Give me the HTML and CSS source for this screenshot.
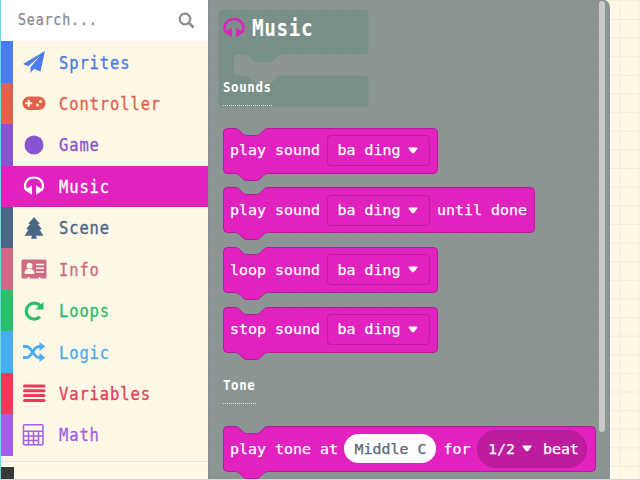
FILE: index.html
```
<!DOCTYPE html>
<html lang="en">
<head>
<meta charset="utf-8">
<title>Toolbox</title>
<link rel="stylesheet" href="styles.css">
</head>
<body>
<svg class="defs" width="0" height="0">
  <symbol id="phones" viewBox="0 0 22 20"><path d="M3 14.500A9.500 8.800 0 1 1 19 14.500" fill="none" stroke="currentColor" stroke-width="2.500"/><path d="M8.800 9.500v9.700L1.800 14.500l1.500-1.500zM13.200 9.500v9.700l7-4.700-1.500-1.500z" fill="currentColor"/></symbol>
  <symbol id="caret" viewBox="0 0 10 7"><path d="M1.300.5h7.400q1.200 0 .7 1.200L6 5.900q-1 .8-2 0L.6 1.700Q.1.500 1.300.5z" fill="#fff"/></symbol>
</svg>
<div class="app">
  <aside class="sidebar">
    <div class="search"><span class="word">Search...</span>
      <svg width="17" height="17" viewBox="0 0 17 17"><circle cx="7" cy="7" r="5.300" fill="none" stroke="#8e8e8e" stroke-width="2.200"/><path d="M11 11l4 4" stroke="#8e8e8e" stroke-width="2.500" stroke-linecap="round"/></svg>
    </div>
    <div class="row sprites"><svg class="ico" viewBox="0 0 24 24"><path d="M23 1L1 14l5.200 2.200L18 6 8.500 17.200V23l3.500-4.200 6.500 2.700z" fill="currentColor"/></svg><span class="word">Sprites</span></div>
    <div class="row controller"><svg class="ico" viewBox="0 0 24 24"><rect x=".5" y="5.500" width="23" height="13.500" rx="6.700" fill="currentColor"/><path d="M6.700 8.700v7M3.200 12.200h7" stroke="#fff8e6" stroke-width="2"/><circle cx="18.500" cy="10.500" r="1.500" fill="#fff8e6"/><circle cx="15.500" cy="14" r="1.500" fill="#fff8e6"/></svg><span class="word">Controller</span></div>
    <div class="row game"><svg class="ico" viewBox="0 0 24 24"><circle cx="12" cy="12" r="9.500" fill="currentColor"/></svg><span class="word">Game</span></div>
    <div class="row music"><svg class="ico" viewBox="0 0 24 24"><use href="#phones" x="1.500" y="2.500" width="21" height="19"/></svg><span class="word">Music</span></div>
    <div class="row scene"><svg class="ico" viewBox="0 0 24 24"><path d="M12 1.500l5.500 6-2 .5 4 5-2.300.5L21 19.500h-7.300l.8 3h-5l.8-3H3l3.800-6-2.300-.5 4-5-2-.5z" fill="currentColor" stroke="currentColor" stroke-linejoin="round" stroke-width=".5"/></svg><span class="word">Scene</span></div>
    <div class="row info"><svg class="ico wide" viewBox="0 0 26 24"><path d="M2 2.500h22q1.500 0 1.500 1.500v16q0 1.500-1.500 1.500h-4.500V20h-2v1.500h-9V20h-2v1.500H2Q.5 21.500.5 20V4Q.5 2.500 2 2.500z" fill="currentColor"/><circle cx="8.500" cy="8.700" r="3" fill="#fff8e6"/><path d="M4 16.500v-1q0-2.500 2.500-3h4q2.500.5 2.500 3v1z" fill="#fff8e6" stroke="#fff8e6"/><path d="M15 7.500h8M15 11.200h8M15 15h8" stroke="#fff8e6" stroke-width="1.400"/></svg><span class="word">Info</span></div>
    <div class="row loops"><svg class="ico" viewBox="0 0 24 24"><path d="M18.500 7.200A8 8 0 1 0 18 17.700" fill="none" stroke="currentColor" stroke-width="3.300"/><path d="M21.500 2.700v7.700h-8.300z" fill="currentColor"/></svg><span class="word">Loops</span></div>
    <div class="row logic"><svg class="ico" viewBox="0 0 24 24"><path d="M1 6.500h3.500C10 6.500 11 17.500 17 17.500h2M1 17.500h3.500C10 17.500 11 6.500 17 6.500h2" fill="none" stroke="currentColor" stroke-width="2.900"/><path d="M17.500 2v9l5.800-4.500zM17.500 13v9l5.800-4.500z" fill="currentColor"/></svg><span class="word">Logic</span></div>
    <div class="row variables"><svg class="ico" viewBox="0 0 24 24"><path d="M2.500 4h19.500M2.500 8.800h19.500M2.500 13.600h19.500M2.500 18.400h19.500" stroke="currentColor" stroke-width="3" stroke-linecap="round"/></svg><span class="word">Variables</span></div>
    <div class="row math"><svg class="ico" viewBox="0 0 24 24"><path d="M2.500 1.800h17.500q1 0 1 1v18q0 1-1 1h-17.500q-1 0-1-1v-18q0-1 1-1zM1.500 8.300h19.500M1.500 13h19.500M1.500 17.500h15M6.500 8.300v13.500M11.500 8.300v13.500M16.500 8.300v13.500" fill="none" stroke="currentColor" stroke-width="1.500"/></svg><span class="word">Math</span></div>
    <div class="rule"></div>
    <div class="next"></div>
  </aside>
  <main class="flyout">
    <svg class="ghost" width="152" height="100" viewBox="0 0 152 100"><path d="M5 .5h141q4.500 0 4.500 4.500v36q0 4.500-4.500 4.500H64q-3 0-5 2l-4 4q-2 2-5 2H40q-3 0-5-2l-4-4q-2-2-5-2h-6q-4 0-4 4v13q0 4 4 4h6q3 0 5 2l4 4q2 2 5 2h10q3 0 5-2l4-4q2-2 5-2h82q4.500 0 4.500 4.500v22q0 4.500-4.500 4.500H5q-4.500 0-4.500-4.500V5q0-4.500 4.500-4.500z" fill="#788f89"/><text x="9" y="28" class="start">on start</text></svg>
    <div class="scroll"></div>
    <h1 class="title"><svg width="22" height="20"><use href="#phones"/></svg><span class="word">Music</span></h1>
    <h2 class="group sounds"><span class="word">Sounds</span></h2>
    <div class="block">
      <svg class="shape" width="216" height="54"><path d="M4.500.5h8q2 0 4 2l3 3q2 2 4 2h10q2 0 4-2l3-3q2-2 4-2h166q4 0 4 4v37q0 4-4 4H44.500q-2 0-4 2l-3 3q-2 2-4 2h-10q-2 0-4-2l-3-3q-2-2-4-2h-8q-4 0-4-4v-37q0-4 4-4z"/></svg>
      <span>play sound</span><span class="field">ba ding<svg class="caret"><use href="#caret"/></svg></span>
    </div>
    <div class="block">
      <svg class="shape" width="314" height="54"><path d="M4.500.5h8q2 0 4 2l3 3q2 2 4 2h10q2 0 4-2l3-3q2-2 4-2h263q4 0 4 4v37q0 4-4 4H44.500q-2 0-4 2l-3 3q-2 2-4 2h-10q-2 0-4-2l-3-3q-2-2-4-2h-8q-4 0-4-4v-37q0-4 4-4z"/></svg>
      <span>play sound</span><span class="field">ba ding<svg class="caret"><use href="#caret"/></svg></span><span>until done</span>
    </div>
    <div class="block">
      <svg class="shape" width="216" height="54"><path d="M4.500.5h8q2 0 4 2l3 3q2 2 4 2h10q2 0 4-2l3-3q2-2 4-2h166q4 0 4 4v37q0 4-4 4H44.500q-2 0-4 2l-3 3q-2 2-4 2h-10q-2 0-4-2l-3-3q-2-2-4-2h-8q-4 0-4-4v-37q0-4 4-4z"/></svg>
      <span>loop sound</span><span class="field">ba ding<svg class="caret"><use href="#caret"/></svg></span>
    </div>
    <div class="block">
      <svg class="shape" width="216" height="54"><path d="M4.500.5h8q2 0 4 2l3 3q2 2 4 2h10q2 0 4-2l3-3q2-2 4-2h166q4 0 4 4v37q0 4-4 4H44.500q-2 0-4 2l-3 3q-2 2-4 2h-10q-2 0-4-2l-3-3q-2-2-4-2h-8q-4 0-4-4v-37q0-4 4-4z"/></svg>
      <span>stop sound</span><span class="field">ba ding<svg class="caret"><use href="#caret"/></svg></span>
    </div>
    <h2 class="group tone"><span class="word">Tone</span></h2>
    <div class="block">
      <svg class="shape" width="374" height="54"><path d="M4.500.5h8q2 0 4 2l3 3q2 2 4 2h10q2 0 4-2l3-3q2-2 4-2h324q4 0 4 4v37q0 4-4 4H44.500q-2 0-4 2l-3 3q-2 2-4 2h-10q-2 0-4-2l-3-3q-2-2-4-2h-8q-4 0-4-4v-37q0-4 4-4z"/></svg>
      <span>play tone at</span><span class="note">Middle C</span><span>for</span><span class="beat">1/2<svg class="caret"><use href="#caret"/></svg><span>beat</span></span>
    </div>
  </main>
</div>
</body>
</html>
```
FILE: styles.css
```
* { box-sizing: border-box; }
body { margin: 0; }
.defs { display: block; position: absolute; }
.app {
  position: relative;
  display: flex;
  width: 640px;
  height: 480px;
  overflow: hidden;
  background-color: #fff8e6;
  background-image:
    linear-gradient(to right, #f2eadb 1px, transparent 1px),
    linear-gradient(to bottom, #f2eadb 1px, transparent 1px);
  background-size: 18.640px 18.640px;
  background-position: 4.900px 0, 0 .4px;
  font-family: "DejaVu Sans Mono", monospace;
}
.app::after {
  content: "";
  position: absolute;
  inset: auto 0 0 0;
  height: 1px;
  background: #d5d8d3;
}
.word {
  display: inline-block;
  transform: scaleX(.86);
  transform-origin: left center;
  white-space: pre;
}
.sidebar {
  display: flex;
  flex-direction: column;
  flex: none;
  width: 208px;
  background: #fff8e6;
  border-left: 1px solid #6bdbe0;
}
.search {
  display: flex;
  justify-content: space-between;
  align-items: center;
  flex: none;
  height: 41.300px;
  padding: 0 13px 2px 17px;
  background: #fff;
  color: #888;
  font-size: 15.500px;
  letter-spacing: .950px;
  -webkit-text-stroke: .25px;
}
.search svg { position: relative; top: 1px; }
.search .word { width: 120px; }
.row {
  display: flex;
  align-items: center;
  flex: none;
  height: 41.450px;
  padding-left: 9px;
  border-left: 12.500px solid;
  font-size: 18px;
  letter-spacing: 1.030px;
  -webkit-text-stroke: .35px;
}
.ico { flex: none; width: 24px; height: 24px; margin-right: 12.500px; }
.ico.wide { width: 26px; margin: 0 11.500px 0 -1px; }
.sprites { color: #4b7bec; }
.controller { color: #e1614a; }
.game { color: #8854d0; }
.music { color: #fff; background: #e122bf; border-color: #e122bf; }
.scene { color: #4b6584; }
.info { color: #cf6a87; }
.loops { color: #2bbf6c; }
.logic { color: #4bacf0; }
.variables { color: #eb3b5a; }
.math { color: #a55eea; }
.rule { flex: none; height: 1px; margin-top: 5px; background: #e5e3e1; }
.next { flex: none; width: 12.500px; height: 14px; margin-top: 5.200px; background: #393939; }
.flyout {
  position: relative;
  flex: none;
  width: 402.400px;
  padding-left: 14px;
  border-top-right-radius: 7px;
  border-left: 1px solid #84908f;
  background-color: #8b9593;
  background-image:
    linear-gradient(to right, #899391 1px, transparent 1px),
    linear-gradient(to bottom, #899391 1px, transparent 1px);
  background-size: 18.640px 18.640px;
  overflow: hidden;
}
.ghost { position: absolute; left: 8.700px; top: 8.500px; }
.start { font-size: 15px; fill: #849692; }
.scroll {
  position: absolute;
  right: 5.500px;
  top: 1px;
  width: 6px;
  height: 431px;
  border-radius: 3px;
  background: #cbcacb;
}
.title, .group { position: relative; margin: 0; color: #fff; }
.title {
  display: flex;
  align-items: center;
  height: 55px;
  font-size: 22.500px;
  letter-spacing: .700px;
}
.title svg { color: #e122bf; margin-right: 7px; }
.group { display: flex; font-size: 14.500px; letter-spacing: .700px; line-height: 20px; border-bottom: 1px dotted #e3e6e5; }
.sounds { width: 49px; height: 29px; margin: 22px 0 21.600px; }
.tone { width: 33px; height: 29px; margin: 23.300px 0 21.600px; }
.block {
  position: relative;
  display: flex;
  align-items: center;
  gap: 7px;
  height: 45.500px;
  margin-bottom: 14.200px;
  padding: 0 0 0 7px;
  color: #fff;
  font-size: 14.950px;
  white-space: pre;
  -webkit-text-stroke: .25px;
}
.block > span { position: relative; flex: none; }
.shape { position: absolute; left: -.5px; top: 0; fill: #e122bf; stroke: #b31c98; stroke-width: 1; }
.field {
  display: flex;
  align-items: center;
  width: 103px;
  height: 31px;
  padding-left: 9.500px;
  border: 1px solid #b91c9d;
  border-radius: 4px;
}
.caret { flex: none; width: 10px; height: 7px; margin-left: 7.500px; }
.note {
  display: flex;
  align-items: center;
  justify-content: center;
  width: 92px;
  height: 29px;
  margin-left: -.5px;
  background: #fff;
  border-radius: 15px;
  color: #5c6477;
}
.beat {
  display: flex;
  align-items: center;
  width: 110px;
  height: 38px;
  padding-left: 9.500px;
  border: 1px solid #b31c98;
  border-radius: 19px;
  background: #bd1c9f;
}
.beat > span { margin-left: 10.500px; }
```
